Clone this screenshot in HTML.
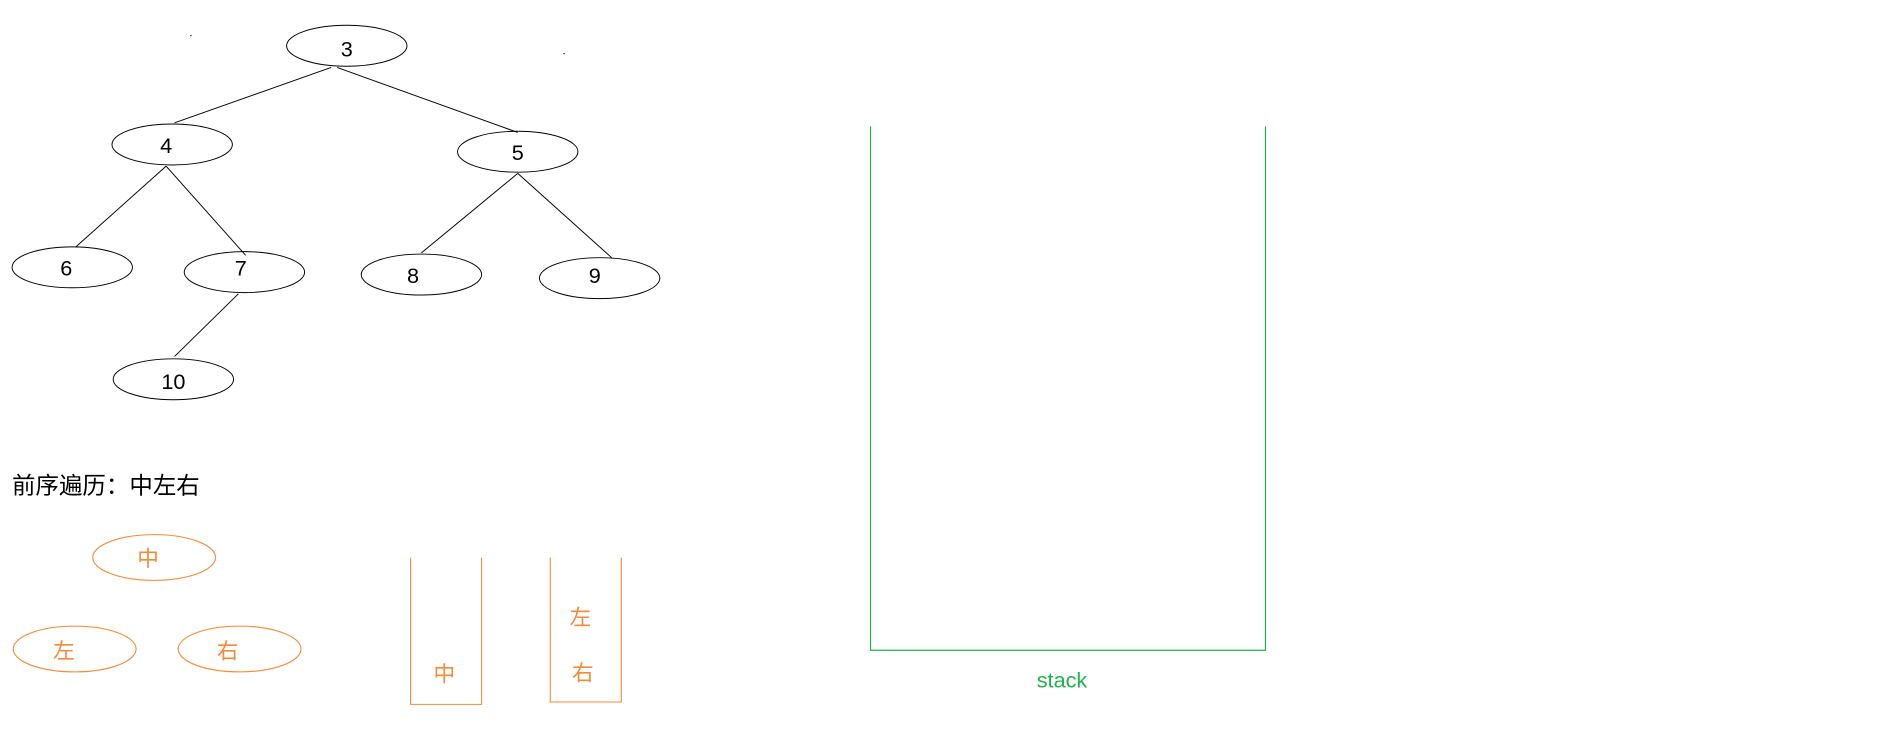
<!DOCTYPE html>
<html><head><meta charset="utf-8"><style>
html,body{margin:0;padding:0;background:#fff;width:1888px;height:751px;overflow:hidden}
svg{display:block}
text{font-family:"Liberation Sans","Noto Sans CJK SC",sans-serif}
</style></head><body>
<svg width="1888" height="751" viewBox="0 0 1568 623.7" xmlns="http://www.w3.org/2000/svg">
<g fill="none" stroke="#000" stroke-width="0.8">
<ellipse cx="288" cy="38" rx="50" ry="17"/>
<ellipse cx="143" cy="120" rx="50" ry="17"/>
<ellipse cx="430" cy="126" rx="50" ry="17"/>
<ellipse cx="60" cy="222" rx="50" ry="17"/>
<ellipse cx="203" cy="226" rx="50" ry="17"/>
<ellipse cx="350" cy="228" rx="50" ry="17"/>
<ellipse cx="498" cy="231" rx="50" ry="17"/>
<ellipse cx="144" cy="315" rx="50" ry="17"/>
<line x1="275" y1="56" x2="145" y2="102"/>
<line x1="280" y1="56" x2="430" y2="110"/>
<line x1="138" y1="138" x2="63" y2="205"/>
<line x1="138" y1="138" x2="204" y2="212"/>
<line x1="430" y1="144" x2="350" y2="210"/>
<line x1="430" y1="144" x2="508" y2="214"/>
<line x1="198" y1="244" x2="145" y2="296"/>
</g>
<g font-size="18" fill="#000" text-anchor="middle">
<text x="288" y="47">3</text>
<text x="138" y="127">4</text>
<text x="430" y="133">5</text>
<text x="55" y="229">6</text>
<text x="200" y="229">7</text>
<text x="343" y="235">8</text>
<text x="494" y="235">9</text>
<text x="144" y="323">10</text>
</g>
<text x="10" y="410" font-size="19.5" fill="#000">前序遍历：中左右</text>
<g fill="none" stroke="#f58a3a" stroke-width="0.9">
<ellipse cx="128" cy="463" rx="51" ry="19"/>
<ellipse cx="62" cy="539" rx="51" ry="19"/>
<ellipse cx="199" cy="539" rx="51" ry="19"/>
<polyline points="341,463 341,585 400,585 400,463"/>
<polyline points="457,463 457,583 516,583 516,463"/>
</g>
<g font-size="18" fill="#f58a3a" text-anchor="middle">
<text x="123" y="470">中</text>
<text x="53" y="547">左</text>
<text x="189" y="547">右</text>
<text x="369" y="566">中</text>
<text x="482" y="519">左</text>
<text x="484" y="565">右</text>
</g>
<polyline points="723,105 723,540 1051,540 1051,105" fill="none" stroke="#22b14c" stroke-width="1"/>
<text x="882" y="571" font-size="18" fill="#22b14c" text-anchor="middle">stack</text>
<rect x="158" y="29" width="1" height="1" fill="#000"/>
<rect x="468" y="44" width="1" height="1" fill="#000"/>
</svg>
</body></html>
